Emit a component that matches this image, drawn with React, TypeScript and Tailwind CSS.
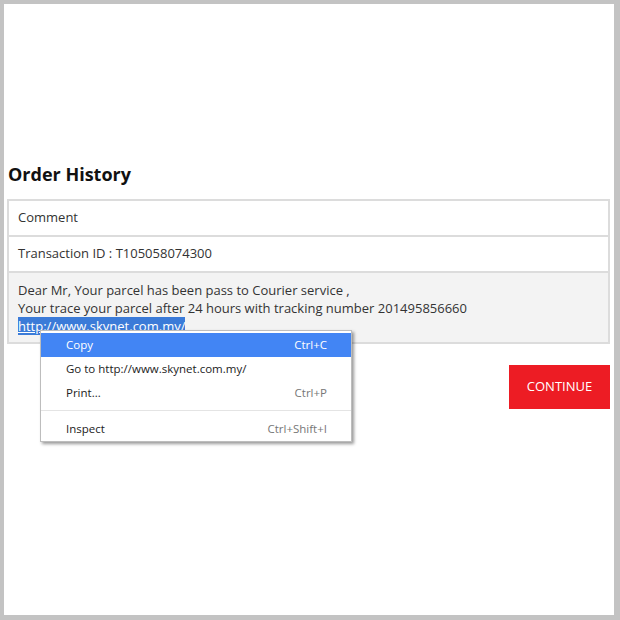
import React from "react";

export default function App() {
  const font = { fontFamily: '"Open Sans", "Noto Sans", sans-serif' };
  return (
    <div
      className="relative w-[620px] h-[620px] overflow-hidden bg-white border-l-4 border-t-4 border-r-[6px] border-b-[5px] border-[#c3c3c3] text-[#333]"
      style={font}
    >
      <div className="pl-[3px] pr-[4px] pt-[158px]">
        <h1 className="pl-[1px] text-[18px] leading-[24px] font-bold text-[#111] mb-[13px]">Order History</h1>
        <div className="text-[13px] text-[#333]">
          <div className="border-x-2 border-t-2 border-[#dcdcdc] h-[36px] pl-[9px] flex items-center bg-white">
            Comment
          </div>
          <div className="border-x-2 border-t-2 border-[#dcdcdc] h-[36px] pl-[9px] flex items-center bg-white">
            Transaction ID : T105058074300
          </div>
          <div className="border-2 border-[#dcdcdc] bg-[#f3f3f3] pl-[9px] pt-[8px] pb-[7px] leading-[18px]">
            <div>Dear Mr, Your parcel has been pass to Courier service ,</div>
            <div>Your trace your parcel after 24 hours with tracking number 201495856660</div>
            <div>
              <span className="bg-[#3b7bd8] text-white underline">http://www.skynet.com.my/</span>
            </div>
          </div>
        </div>
        <div className="flex justify-end mt-[21px]">
          <button className="w-[101px] h-[44px] bg-[#ed1c24] text-white text-[13px] flex items-center justify-center">
            CONTINUE
          </button>
        </div>
      </div>

      <div
        className="absolute left-[36px] top-[326px] w-[312px] bg-white border border-[#bdbdbd] shadow-[2px_2px_3px_rgba(0,0,0,0.4)] pt-[2px] pb-0 text-[11.5px] text-[#222]"
        style={font}
      >
        <div className="h-[24px] flex items-center justify-between pl-[25px] pr-[24px] bg-[#4285f4] text-white">
          <span>Copy</span>
          <span>Ctrl+C</span>
        </div>
        <div className="h-[24px] flex items-center justify-between pl-[25px] pr-[24px]">
          <span>Go to http://www.skynet.com.my/</span>
        </div>
        <div className="h-[24px] flex items-center justify-between pl-[25px] pr-[24px]">
          <span>Print...</span>
          <span className="text-[#777]">Ctrl+P</span>
        </div>
        <div className="mt-[5px] mb-[6px] border-t border-[#e4e4e4]" />
        <div className="h-[24px] flex items-center justify-between pl-[25px] pr-[24px]">
          <span>Inspect</span>
          <span className="text-[#777]">Ctrl+Shift+I</span>
        </div>
      </div>
    </div>
  );
}
